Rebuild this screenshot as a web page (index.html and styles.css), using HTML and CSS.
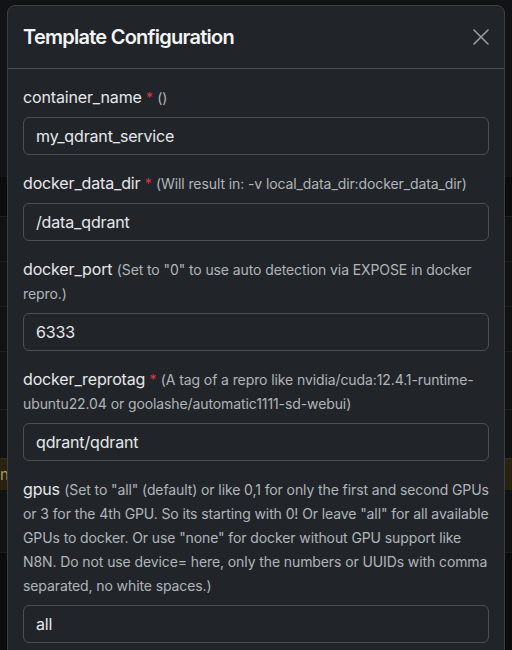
FILE: index.html
```html
<!DOCTYPE html>
<html lang="en">
<head>
<meta charset="utf-8">
<title>Template Configuration</title>
<link rel="stylesheet" href="styles.css">
</head>
<body>
<div class="page">
  <div class="row row-top"></div>
  <div class="row row-dark"></div>
  <div class="row row-45"></div>
  <div class="row row-45"></div>
  <div class="row row-45"></div>
  <div class="row row-58"></div>
  <div class="row row-48"></div>
  <div class="row row-warn"><span class="row-text">n</span></div>
  <div class="row row-63"></div>
  <div class="row row-end"></div>
</div>

<div class="modal" role="dialog" aria-labelledby="modal-title">
  <div class="modal-header">
    <h5 class="modal-title" id="modal-title">Template Configuration</h5>
    <button class="btn-close" type="button" aria-label="Close">
      <svg width="16" height="16" viewBox="0 0 16 16" aria-hidden="true">
        <path d="M1 1 L15 15 M15 1 L1 15" stroke="currentColor" stroke-width="1.6" stroke-linecap="round" fill="none"/>
      </svg>
    </button>
  </div>
  <div class="modal-body">
    <div class="field">
      <label class="form-label">container_name <span class="req">*</span> <span class="hint">()</span></label>
      <input class="form-control" type="text" value="my_qdrant_service">
    </div>
    <div class="field">
      <label class="form-label">docker_data_dir <span class="req">*</span> <span class="hint">(Will result in: -v local_data_dir:docker_data_dir)</span></label>
      <input class="form-control" type="text" value="/data_qdrant">
    </div>
    <div class="field">
      <label class="form-label">docker_port <span class="hint">(Set to "0" to use auto detection via EXPOSE in docker repro.)</span></label>
      <input class="form-control" type="text" value="6333">
    </div>
    <div class="field">
      <label class="form-label">docker_reprotag <span class="req">*</span> <span class="hint">(A tag of a repro like nvidia/cuda:12.4.1-runtime-ubuntu22.04 or goolashe/automatic1111-sd-webui)</span></label>
      <input class="form-control" type="text" value="qdrant/qdrant">
    </div>
    <div class="field">
      <label class="form-label">gpus <span class="hint">(Set to "all" (default) or like 0,1 for only the first and second GPUs or 3 for the 4th GPU. So its starting with 0! Or leave "all" for all available GPUs to docker. Or use "none" for docker without GPU support like N8N. Do not use device= here, only the numbers or UUIDs with comma separated, no white spaces.)</span></label>
      <input class="form-control" type="text" value="all">
    </div>
  </div>
</div>
</body>
</html>
```

FILE: styles.css
```css
* { box-sizing: border-box; }

html, body {
  margin: 0;
  padding: 0;
  height: 100%;
  overflow: hidden;
}

body {
  background: #0b0c0d;
  font-family: Inter, "Noto Sans", "Liberation Sans", sans-serif;
  color: #dee2e6;
}

/* page behind the backdrop */
.page {
  display: flex;
  flex-direction: column;
}

.row {
  flex: none;
  background: #101214;
  border-bottom: 1px solid #1c1f22;
}
.row-top { height: 177px; background: #111316; border-bottom: 0; }
.row-dark { height: 40px; background: #0b0c0d; }
.row-45 { height: 45px; }
.row-58 { height: 58px; }
.row-48 { height: 48px; border-bottom: 0; }
.row-warn {
  height: 32px;
  background: #2a2211;
  border-top: 1px solid #3a2e14;
  border-bottom: 0;
  display: flex;
  align-items: center;
}
.row-63 { height: 63px; }
.row-end { height: 100px; background: #0b0c0d; border-bottom: 0; }

.row-text {
  color: #b89a5a;
  font-size: 15px;
  line-height: 1;
}

/* modal */
.modal {
  position: fixed;
  left: 7px;
  top: 5px;
  width: 498px;
  background: #212529;
  border: 1px solid #3b3f44;
  border-radius: 8px;
}

.modal-header {
  display: flex;
  align-items: center;
  justify-content: space-between;
  padding: 16px 11px 16px 15px;
  border-bottom: 1px solid #4b5057;
}

.modal-title {
  margin: 0;
  font-size: 20px;
  line-height: 30px;
  font-weight: 600;
  color: #f3f4f5;
  letter-spacing: -0.75px;
}

.btn-close {
  display: flex;
  align-items: center;
  justify-content: center;
  width: 24px;
  height: 24px;
  padding: 0;
  border: 0;
  background: transparent;
  color: #9a9ca0;
  cursor: pointer;
}

.modal-body {
  padding: 16px 15px;
}

.field {
  display: flex;
  flex-direction: column;
  margin-bottom: 16px;
}

.form-label {
  display: block;
  margin-bottom: 8px;
  font-size: 16px;
  line-height: 24px;
  color: #e6e8ea;
  letter-spacing: -0.15px;
}

.req {
  color: #dc3545;
  font-size: 14px;
  line-height: 1;
}

.hint {
  font-size: 14px;
  line-height: 1;
  color: #b0b5ba;
  letter-spacing: -0.1px;
}

.form-control {
  display: block;
  width: 100%;
  height: 38px;
  padding: 6px 12px;
  font-family: inherit;
  font-size: 16px;
  line-height: 24px;
  color: #e6e8ea;
  background: #212529;
  border: 1px solid #4a4f55;
  border-radius: 6px;
  letter-spacing: -0.15px;
}
```
